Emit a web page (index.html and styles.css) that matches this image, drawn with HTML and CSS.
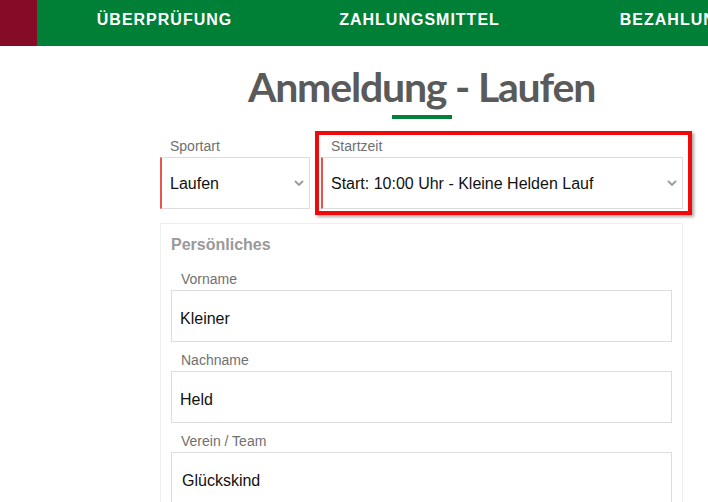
FILE: index.html
```html
<!DOCTYPE html>
<html lang="de">
<head>
<meta charset="utf-8">
<title>Anmeldung - Laufen</title>
<link rel="stylesheet" href="styles.css">
</head>
<body>
<header class="topbar">
  <div class="brand-block"></div>
  <nav class="nav">
    <a class="nav-item">ÜBERPRÜFUNG</a>
    <a class="nav-item">ZAHLUNGSMITTEL</a>
    <a class="nav-item">BEZAHLUNG</a>
  </nav>
</header>
<main class="main">
  <h1 class="title">Anmeldung - Laufen</h1>
  <div class="title-bar"></div>
  <div class="select-row">
    <div class="field">
      <label class="label">Sportart</label>
      <div class="select required">
        <span class="value">Laufen</span>
        <svg class="chev" width="10" height="6" viewBox="0 0 10 6"><polyline points="1,1 5,5 9,1" fill="none" stroke="#9a9a9a" stroke-width="1.8"/></svg>
      </div>
    </div>
    <div class="field highlighted">
      <label class="label">Startzeit</label>
      <div class="select required">
        <span class="value">Start: 10:00 Uhr - Kleine Helden Lauf</span>
        <svg class="chev" width="10" height="6" viewBox="0 0 10 6"><polyline points="1,1 5,5 9,1" fill="none" stroke="#9a9a9a" stroke-width="1.8"/></svg>
      </div>
      <div class="highlight-box"></div>
    </div>
  </div>
  <section class="card">
    <h2 class="card-title">Persönliches</h2>
    <div class="group">
      <label class="label">Vorname</label>
      <div class="input required">Kleiner</div>
    </div>
    <div class="group">
      <label class="label">Nachname</label>
      <div class="input required">Held</div>
    </div>
    <div class="group">
      <label class="label">Verein / Team</label>
      <div class="input">Glückskind</div>
    </div>
  </section>
</main>
</body>
</html>
```
FILE: styles.css
```css
html, body {
  margin: 0;
  padding: 0;
  background: #ffffff;
  overflow: hidden;
}
body {
  font-family: "Liberation Sans", Arial, sans-serif;
  color: #111;
  width: 708px;
  height: 502px;
}
.topbar {
  display: flex;
  height: 46px;
  background: #008036;
  overflow: hidden;
}
.brand-block {
  width: 37px;
  flex: none;
  background: #850c27;
}
.nav {
  display: flex;
  flex: none;
}
.nav-item {
  width: 255px;
  flex: none;
  text-align: center;
  color: #ffffff;
  font-weight: 700;
  font-size: 16px;
  letter-spacing: 1px;
  line-height: 40px;
  white-space: nowrap;
}
.main {
  margin-left: 160px;
  width: 523px;
}
.title {
  margin: 17px 0 0;
  text-align: center;
  font-family: Lato, "Open Sans", sans-serif;
  font-weight: 700;
  font-size: 41px;
  line-height: 48px;
  color: #5a5a5a;
  letter-spacing: -1.2px;
}
.title-bar {
  width: 60px;
  height: 4px;
  margin: 4px auto 0;
  background: #00803a;
}
.select-row {
  display: grid;
  grid-template-columns: 150px 1fr;
  column-gap: 11px;
  margin-top: 18px;
}
.field {
  position: relative;
}
.label {
  display: block;
  font-size: 14px;
  line-height: 18px;
  color: #707070;
  padding-left: 10px;
  margin-bottom: 2px;
}
.select {
  display: flex;
  align-items: center;
  justify-content: space-between;
  height: 48px;
  padding: 2px 5px 0 9px;
  border: 1px solid #dddddd;
  font-size: 16px;
  color: #111;
}
.required {
  border-left: 2px solid #e4574a;
}
.select.required {
  padding-left: 8px;
}
.value {
  white-space: nowrap;
}
.chev {
  flex: none;
  margin-top: -2px;
}
.highlight-box {
  position: absolute;
  left: -6px;
  top: -6px;
  right: -9px;
  bottom: -6px;
  border: 4px solid #ee0a0a;
  box-shadow: 2px 2px 3px rgba(0, 0, 0, 0.35);
  pointer-events: none;
}
.card {
  margin-top: 14px;
  border: 1px solid #eeeeee;
  padding: 11px 10px 10px;
}
.card-title {
  margin: 0 0 15px;
  font-size: 16px;
  line-height: 20px;
  font-weight: 700;
  color: #999999;
}
.group {
  margin-bottom: 9px;
}
.input {
  display: flex;
  align-items: center;
  height: 44px;
  padding-top: 6px;
  border: 1px solid #dddddd;
  padding-left: 10px;
  font-size: 16px;
  color: #111;
}
.input.required {
  padding-left: 8px;
}
```
